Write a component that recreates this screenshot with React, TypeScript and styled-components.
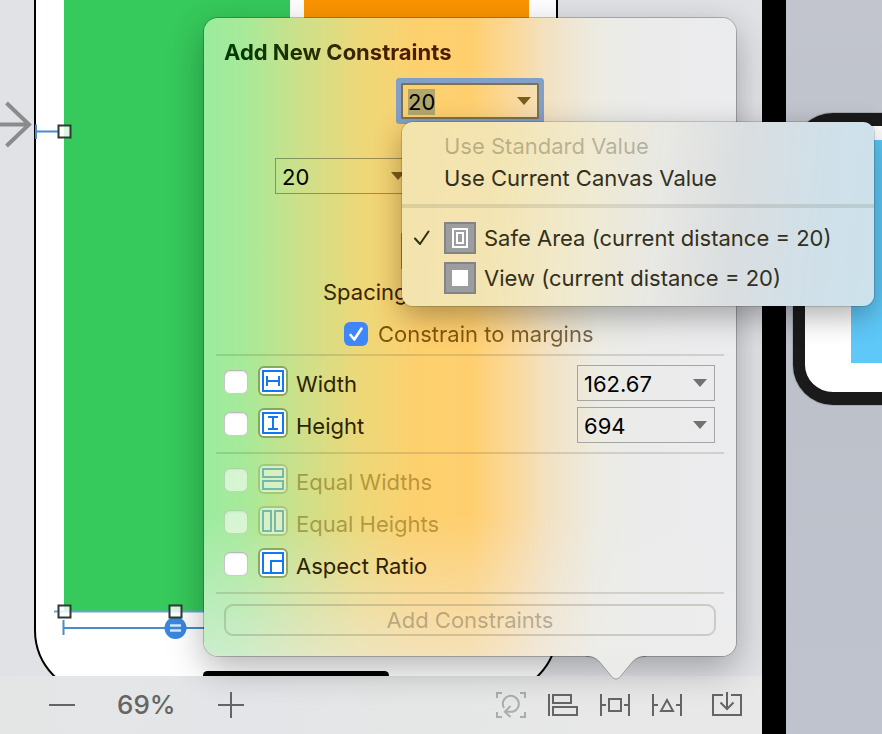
import React, { useEffect, useRef } from "react";
import styled, { createGlobalStyle, css } from "styled-components";

const GlobalStyle = createGlobalStyle`
  *, *::before, *::after { box-sizing: border-box; }
  body { margin: 0; font-family: Inter, "Liberation Sans", sans-serif; font-size: 22px; line-height: 28px; }
  button, input { font: inherit; color: inherit; margin: 0; }
`;

/* ---------- window ---------- */

const Screen = styled.div`
  display: flex;
  min-height: 100vh;
  overflow: hidden;
  background: #000;
`;

const Editor = styled.main`
  position: relative;
  z-index: 1;
  flex: 1;
  min-width: 0;
  display: flex;
  flex-direction: column;
`;

const Divider = styled.div`
  width: 24px;
  background: #000;
`;

const Desktop = styled.aside`
  position: relative;
  width: 96px;
  overflow: hidden;
  background: linear-gradient(180deg, #c2c5cd 0%, #bcc1ca 50%, #bec3cd 100%);
`;

const Simulator = styled.div`
  position: absolute;
  left: 7px;
  top: 113px;
  width: 400px;
  height: 292px;
  border: 13px solid #1a1a1a;
  border-left-width: 12px;
  border-radius: 40px;
  background: #fff;
  padding: 14px 0 29px 46px;
  box-shadow: 0 0 0 1px #a6a9b1;
`;

const SimulatorView = styled.div`
  height: 100%;
  background: #5ec8f8;
`;

/* ---------- canvas ---------- */

const Canvas = styled.section`
  position: relative;
  flex: 1;
  overflow: hidden;
  background: #e1e2e6;
`;

const Device = styled.div`
  position: absolute;
  left: 34px;
  top: -80px;
  width: 524px;
  height: 776px;
  border: 2px solid #000;
  border-radius: 66px;
  background: #fff;
`;

const ColorView = styled.div<{ $x: number; $w: number; $color: string }>`
  position: absolute;
  top: 0;
  left: ${(p) => p.$x}px;
  width: ${(p) => p.$w}px;
  height: 611px;
  background: ${(p) => p.$color};
`;

const HomeIndicator = styled.div`
  position: absolute;
  left: 203px;
  top: 671px;
  width: 186px;
  height: 9px;
  border-radius: 5px;
  background: #000;
`;

const Overlay = styled.svg`
  position: absolute;
  left: 0;
  top: 0;
`;

/* ---------- bottom bar ---------- */

const BottomBar = styled.footer`
  display: flex;
  align-items: center;
  justify-content: space-between;
  height: 58px;
  padding: 0 20px 0 49px;
  background: linear-gradient(90deg, #e4e6e6, #e4e5e8 35%, #e5e7e6 55%, #e8e8e8);
  color: #656565;
`;

const ZoomGroup = styled.div`
  display: flex;
  align-items: center;
  gap: 42px;
`;

const ToolGroup = styled.div`
  display: flex;
  align-items: center;
  gap: 22px;
`;

const ZoomValue = styled.output`
  font-size: 26px;
  font-weight: 500;
`;

const ToolButton = styled.button<{ $last?: boolean }>`
  display: flex;
  padding: 0;
  border: 0;
  background: none;
  margin-left: ${(p) => (p.$last ? "8px" : "0")};
  &:disabled { opacity: 0.45; }
`;

/* ---------- popover ---------- */

const Popover = styled.form`
  position: absolute;
  right: 26px;
  bottom: 78px;
  width: 532px;
  padding: 20px 12px;
  border-radius: 14px;
  background:
    linear-gradient(180deg, transparent 78%, rgba(238, 238, 238, 0.58) 100%),
    linear-gradient(90deg, #9bec9f 0%, #a5ea99 7%, #c9e18b 17%, #ecd879 29%, #fdd06e 40%, #ffcf6e 50%, #fbd89a 58%, #f2e2c4 65%, #ecebe3 74%, #ebebeb 82%, #ebecee 100%);
  box-shadow: 0 0 0 1px rgba(0, 0, 0, 0.22), 0 12px 36px rgba(0, 0, 0, 0.3);
`;

const PopoverTail = styled.svg`
  position: absolute;
  right: 90px;
  top: calc(100% - 1px);
`;

const Title = styled.h2`
  width: fit-content;
  margin: 0 0 17px 8px;
  font-size: 22px;
  line-height: 28px;
  font-weight: 700;
  background: linear-gradient(90deg, #003c00, #2b2c00 45%, #4a1c00 75%);
  background-clip: text;
  color: transparent;
`;

const Pins = styled.div`
  display: grid;
  gap: 39px;
  width: 390px;
  margin: 0 auto;
`;

const PinRow = styled.div<{ $align: string }>`
  display: flex;
  justify-content: ${(p) => p.$align};
`;

const SpacingLabel = styled.p`
  margin: 9px 0 14px 107px;
  color: #3d2400;
`;

const MarginsRow = styled.label`
  display: flex;
  align-items: center;
  gap: 10px;
  margin: 0 0 6px 128px;
`;

const MarginsText = styled.span`
  background: linear-gradient(90deg, #7f5200, #84590f 55%, #6f6652);
  background-clip: text;
  color: transparent;
`;

const Separator = styled.hr`
  height: 2px;
  margin: 0;
  border: 0;
  background: rgba(70, 70, 50, 0.17);
`;

const Rows = styled.div`
  display: grid;
  grid-auto-rows: 42px;
  padding: 7px 9px 5px 8px;
`;

const Row = styled.div`
  display: flex;
  align-items: center;
  justify-content: space-between;
`;

const RowLabel = styled.label<{ $dim?: boolean }>`
  display: flex;
  align-items: center;
  gap: 8px;
  color: ${(p) => (p.$dim ? "rgba(120, 88, 0, 0.5)" : "#302200")};
`;

const Check = styled.span<{ $inRow?: boolean }>`
  display: grid;
  height: 28px;
  align-items: center;
  ${(p) => p.$inRow && "margin: 0 2px 4px 0;"}
  & > * { grid-area: 1 / 1; }
  svg { pointer-events: none; }
`;

const CheckBox = styled.input`
  appearance: none;
  width: 24px;
  height: 24px;
  border-radius: 6px;
  background: #fff;
  box-shadow: inset 0 0 0 1px rgba(0, 0, 0, 0.2), inset 0 2px 2px rgba(0, 0, 0, 0.1);
  &:checked { background: #3f87f8; box-shadow: none; }
  &:disabled { opacity: 0.55; }
`;

const IconTile = styled.span<{ $dim?: boolean }>`
  display: flex;
  width: 30px;
  height: 30px;
  padding: 2px;
  margin-bottom: 6px;
  border-radius: 6px;
  border: 2px solid rgba(80, 90, 30, 0.45);
  background: #fff;
  background-clip: padding-box;
  opacity: ${(p) => (p.$dim ? 0.45 : 1)};
`;

const Combo = styled.span<{ $focused?: boolean; $neutral?: boolean }>`
  display: flex;
  align-items: center;
  width: 138px;
  height: 36px;
  padding: 0 7px 0 5px;
  border: 1px solid rgba(70, 70, 50, 0.5);
  color: #000;
  ${(p) =>
    p.$neutral &&
    css`
      margin-bottom: 2px;
      border-color: #a5a5a3;
    `}
  ${(p) =>
    p.$focused &&
    css`
      border: 2px solid #7c7250;
      padding: 0 6px 0 4px;
      border-radius: 1px;
      box-shadow: 0 0 0 5px #819fc9;
    `}
`;

const ComboInput = styled.input`
  flex: 1;
  min-width: 0;
  width: 100%;
  height: 30px;
  padding: 2px 0 0 1px;
  border: 0;
  outline: 0;
  background: none;
  &::selection { background: #b1a76c; color: #000; }
`;

const ComboArrow = styled.button<{ $neutral?: boolean }>`
  display: flex;
  padding: 0;
  border: 0;
  background: none;
  color: ${(p) => (p.$neutral ? "#717171" : "#7a5c1c")};
`;

const AddButton = styled.button`
  display: flex;
  align-items: center;
  justify-content: center;
  width: calc(100% - 16px);
  height: 32px;
  margin: 10px 8px 0;
  padding: 0;
  border: 2px solid rgba(70, 70, 50, 0.2);
  border-radius: 9px;
  background: none;
  color: rgba(100, 90, 60, 0.42);
`;

/* ---------- menu ---------- */

const Menu = styled.div`
  position: absolute;
  left: 198px;
  top: 104px;
  width: 472px;
  padding: 8px 0;
  border-radius: 11px;
  background: linear-gradient(96deg, #f3e3ac 0%, #f3e5b4 22%, #efead2 40%, #e8e8e4 54%, #dadee0 70%, #d0e0e9 87%, #cde2ec 100%);
  box-shadow: 0 0 0 1px rgba(0, 0, 0, 0.14), 0 10px 30px rgba(0, 0, 0, 0.32);
  color: #33301c;
`;

const MenuItem = styled.button<{ $tall?: boolean }>`
  display: grid;
  grid-template-columns: 22px auto auto;
  column-gap: 8px;
  justify-content: start;
  align-items: center;
  width: 100%;
  height: ${(p) => (p.$tall ? 40 : 32)}px;
  padding: 0 0 0 12px;
  border: 0;
  background: none;
  text-align: left;
  white-space: nowrap;
  &:disabled { color: rgba(80, 70, 40, 0.35); }
`;

const ItemBody = styled.span`
  grid-column: 2;
  display: flex;
  align-items: center;
  gap: 8px;
`;

const MenuSeparator = styled.hr`
  height: 4px;
  margin: 10px 0;
  border: 0;
  background: rgba(80, 80, 60, 0.14);
`;

/* ---------- drawings ---------- */

const Triangle = () => (
  <svg width="14" height="8" viewBox="0 0 14 8" aria-hidden="true">
    <path d="M0 0H14L7 8Z" fill="currentColor" />
  </svg>
);

const Tick = () => (
  <svg width="24" height="24" viewBox="0 0 24 24" fill="none" aria-hidden="true">
    <path d="M6.5 13l3.8 4.5L17.5 6.5" stroke="#fff" strokeWidth="2.6" strokeLinecap="round" strokeLinejoin="round" />
  </svg>
);

const MenuTick = () => (
  <svg width="16" height="16" viewBox="0 0 16 16" fill="none" aria-hidden="true">
    <path d="M1 8.5L6 14L14.5 1.5" stroke="#33300c" strokeWidth="2" strokeLinecap="round" strokeLinejoin="round" />
  </svg>
);

const SafeAreaIcon = () => (
  <svg width="32" height="32" viewBox="0 0 32 32" fill="none" aria-hidden="true">
    <rect x="1" y="1" width="30" height="30" fill="#9d9da0" stroke="#838487" strokeWidth="2" />
    <rect x="9" y="7" width="14" height="18" stroke="#fff" strokeWidth="2" />
    <rect x="13" y="11" width="6" height="10" stroke="#fff" strokeWidth="2" />
  </svg>
);

const ViewIcon = () => (
  <svg width="32" height="32" viewBox="0 0 32 32" fill="none" aria-hidden="true">
    <rect x="1" y="1" width="30" height="30" fill="#9d9da0" stroke="#838487" strokeWidth="2" />
    <rect x="8" y="8" width="16" height="16" fill="#fff" />
  </svg>
);

const TILE_PATHS = {
  width: "M1 1H21V21H1ZM5 6V16M17 6V16M5 11H17",
  height: "M1 1H21V21H1ZM6 5H16M6 17H16M11 5V17",
  equalWidths: "M1 1H21V9H1ZM1 13H21V21H1Z",
  equalHeights: "M1 1H9V21H1ZM13 1H21V21H13Z",
  aspect: "M1 1H21V21H1ZM9 21V9H21",
};

const Tile = ({ kind, dim }: { kind: keyof typeof TILE_PATHS; dim?: boolean }) => (
  <IconTile $dim={dim}>
    <svg width="22" height="22" viewBox="0 0 22 22" fill="none" stroke={dim ? "#1f86c8" : "#1277f3"} strokeWidth="2" aria-hidden="true">
      <path d={TILE_PATHS[kind]} />
    </svg>
  </IconTile>
);

const BarIcon = ({ d, width = 30 }: { d: string; width?: number }) => (
  <svg width={width} height="26" viewBox={`0 0 ${width} 26`} fill="none" stroke="currentColor" strokeWidth="2" aria-hidden="true">
    <path d={d} />
  </svg>
);

const Handle = ({ x, y }: { x: number; y: number }) => (
  <rect x={x - 6} y={y - 6} width="12" height="12" fill="#fff" fillOpacity="0.82" stroke="#2f3a33" strokeWidth="2" />
);

/* ---------- parts ---------- */

function ComboBox({ value, label, focused, neutral }: { value: string; label: string; focused?: boolean; neutral?: boolean }) {
  const ref = useRef<HTMLInputElement>(null);
  useEffect(() => {
    if (focused && ref.current) {
      ref.current.focus();
      ref.current.select();
    }
  }, [focused]);
  return (
    <Combo $focused={focused} $neutral={neutral}>
      <ComboInput ref={ref} defaultValue={value} aria-label={label} />
      <ComboArrow type="button" $neutral={neutral} aria-label={`${label} options`}>
        <Triangle />
      </ComboArrow>
    </Combo>
  );
}

function ConstraintRow({ id, text, kind, value, dim }: { id: string; text: string; kind: keyof typeof TILE_PATHS; value?: string; dim?: boolean }) {
  return (
    <Row>
      <RowLabel htmlFor={id} $dim={dim}>
        <Check $inRow>
          <CheckBox id={id} type="checkbox" disabled={dim} />
        </Check>
        <Tile kind={kind} dim={dim} />
        {text}
      </RowLabel>
      {value && <ComboBox value={value} label={`${text} value`} neutral />}
    </Row>
  );
}

export default function App() {
  return (
    <>
      <GlobalStyle />
      <Screen>
        <Editor>
          <Canvas>
            <Device />
            <ColorView $x={64} $w={226} $color="#36c95b" />
            <ColorView $x={304} $w={225} $color="#fc9500" />
            <HomeIndicator />
            <Overlay width="400" height="680" viewBox="0 0 400 680" fill="none" aria-hidden="true">
              <path d="M0 124.5H29M6.5 103L29 124.5L6.5 146" stroke="#8b8b8b" strokeWidth="4" />
              <path d="M36 131.5H58M36 124.5V139" stroke="#4a8bc9" strokeWidth="2" />
              <path d="M54 611.5H400" stroke="#69a5cf" strokeWidth="2" />
              <path d="M63 628H400M63.5 620V635" stroke="#4a8bc9" strokeWidth="2" />
              <circle cx="175.5" cy="628" r="11" fill="#3a87dd" />
              <path d="M170 625.5H181M170 630.5H181" stroke="#d5e8fb" strokeWidth="2.5" />
              <Handle x={64.5} y={131.5} />
              <Handle x={64.5} y={611.5} />
              <Handle x={175.5} y={611.5} />
            </Overlay>
          </Canvas>

          <BottomBar>
            <ZoomGroup>
              <ToolButton type="button" aria-label="Zoom out">
                <BarIcon width={26} d="M0 13H26" />
              </ToolButton>
              <ZoomValue>69%</ZoomValue>
              <ToolButton type="button" aria-label="Zoom in">
                <BarIcon width={26} d="M0 13H26M13 0V26" />
              </ToolButton>
            </ZoomGroup>
            <ToolGroup>
              <ToolButton type="button" disabled aria-label="Update frames">
                <BarIcon d="M1 6V1H6M24 1H29V6M29 20V25H24M6 25H1V20M8 16A8 8 0 1 1 15 19.8H9M14.5 14L8.8 19.8L14.5 25" />
              </ToolButton>
              <ToolButton type="button" aria-label="Align">
                <BarIcon d="M1 2V24M5 3H23V11H5ZM5 15H29V23H5Z" />
              </ToolButton>
              <ToolButton type="button" aria-label="Add new constraints">
                <BarIcon d="M1 2V24M29 2V24M1 13H6M24 13H29M9 7H21V19H9Z" />
              </ToolButton>
              <ToolButton type="button" aria-label="Resolve layout issues">
                <BarIcon d="M1 2V24M29 2V24M1 13H6M24 13H29M15 8L21 19H9Z" />
              </ToolButton>
              <ToolButton type="button" $last aria-label="Embed in">
                <BarIcon d="M11 3H1V23H29V3H19M15 0V17M8.5 10.5L15 17L21.5 10.5" />
              </ToolButton>
            </ToolGroup>
          </BottomBar>

          <Popover onSubmit={(e) => e.preventDefault()}>
            <PopoverTail width="60" height="26" viewBox="0 0 60 26" aria-hidden="true">
              <path d="M0 0V1C10 1 13 6 17 11L26 22Q30 26 34 22L43 11C47 6 50 1 60 1V0Z" fill="#ebebe9" />
              <path d="M0 1.5C10 1.5 13 6 17 11L26 22Q30 26 34 22L43 11C47 6 50 1.5 60 1.5" fill="none" stroke="#000" strokeOpacity="0.28" />
            </PopoverTail>
            <Title>Add New Constraints</Title>
            <Pins>
              <PinRow $align="center">
                <ComboBox value="20" label="Top spacing" focused />
              </PinRow>
              <PinRow $align="start">
                <ComboBox value="20" label="Leading spacing" />
              </PinRow>
              <PinRow $align="center">
                <ComboBox value="" label="Bottom spacing" />
              </PinRow>
            </Pins>
            <SpacingLabel>Spacing</SpacingLabel>
            <MarginsRow>
              <Check>
                <CheckBox type="checkbox" defaultChecked />
                <Tick />
              </Check>
              <MarginsText>Constrain to margins</MarginsText>
            </MarginsRow>
            <Separator />
            <Rows>
              <ConstraintRow id="width" text="Width" kind="width" value="162.67" />
              <ConstraintRow id="height" text="Height" kind="height" value="694" />
            </Rows>
            <Separator />
            <Rows>
              <ConstraintRow id="equal-widths" text="Equal Widths" kind="equalWidths" dim />
              <ConstraintRow id="equal-heights" text="Equal Heights" kind="equalHeights" dim />
              <ConstraintRow id="aspect" text="Aspect Ratio" kind="aspect" />
            </Rows>
            <Separator />
            <AddButton type="submit" disabled>
              Add Constraints
            </AddButton>

            <Menu role="menu">
              <MenuItem type="button" role="menuitem" disabled>
                <ItemBody>Use Standard Value</ItemBody>
              </MenuItem>
              <MenuItem type="button" role="menuitem">
                <ItemBody>Use Current Canvas Value</ItemBody>
              </MenuItem>
              <MenuSeparator />
              <MenuItem type="button" role="menuitemradio" aria-checked="true" $tall>
                <MenuTick />
                <ItemBody>
                  <SafeAreaIcon />
                  Safe Area (current distance = 20)
                </ItemBody>
              </MenuItem>
              <MenuItem type="button" role="menuitemradio" aria-checked="false" $tall>
                <ItemBody>
                  <ViewIcon />
                  View (current distance = 20)
                </ItemBody>
              </MenuItem>
            </Menu>
          </Popover>
        </Editor>
        <Divider />
        <Desktop>
          <Simulator>
            <SimulatorView />
          </Simulator>
        </Desktop>
      </Screen>
    </>
  );
}
